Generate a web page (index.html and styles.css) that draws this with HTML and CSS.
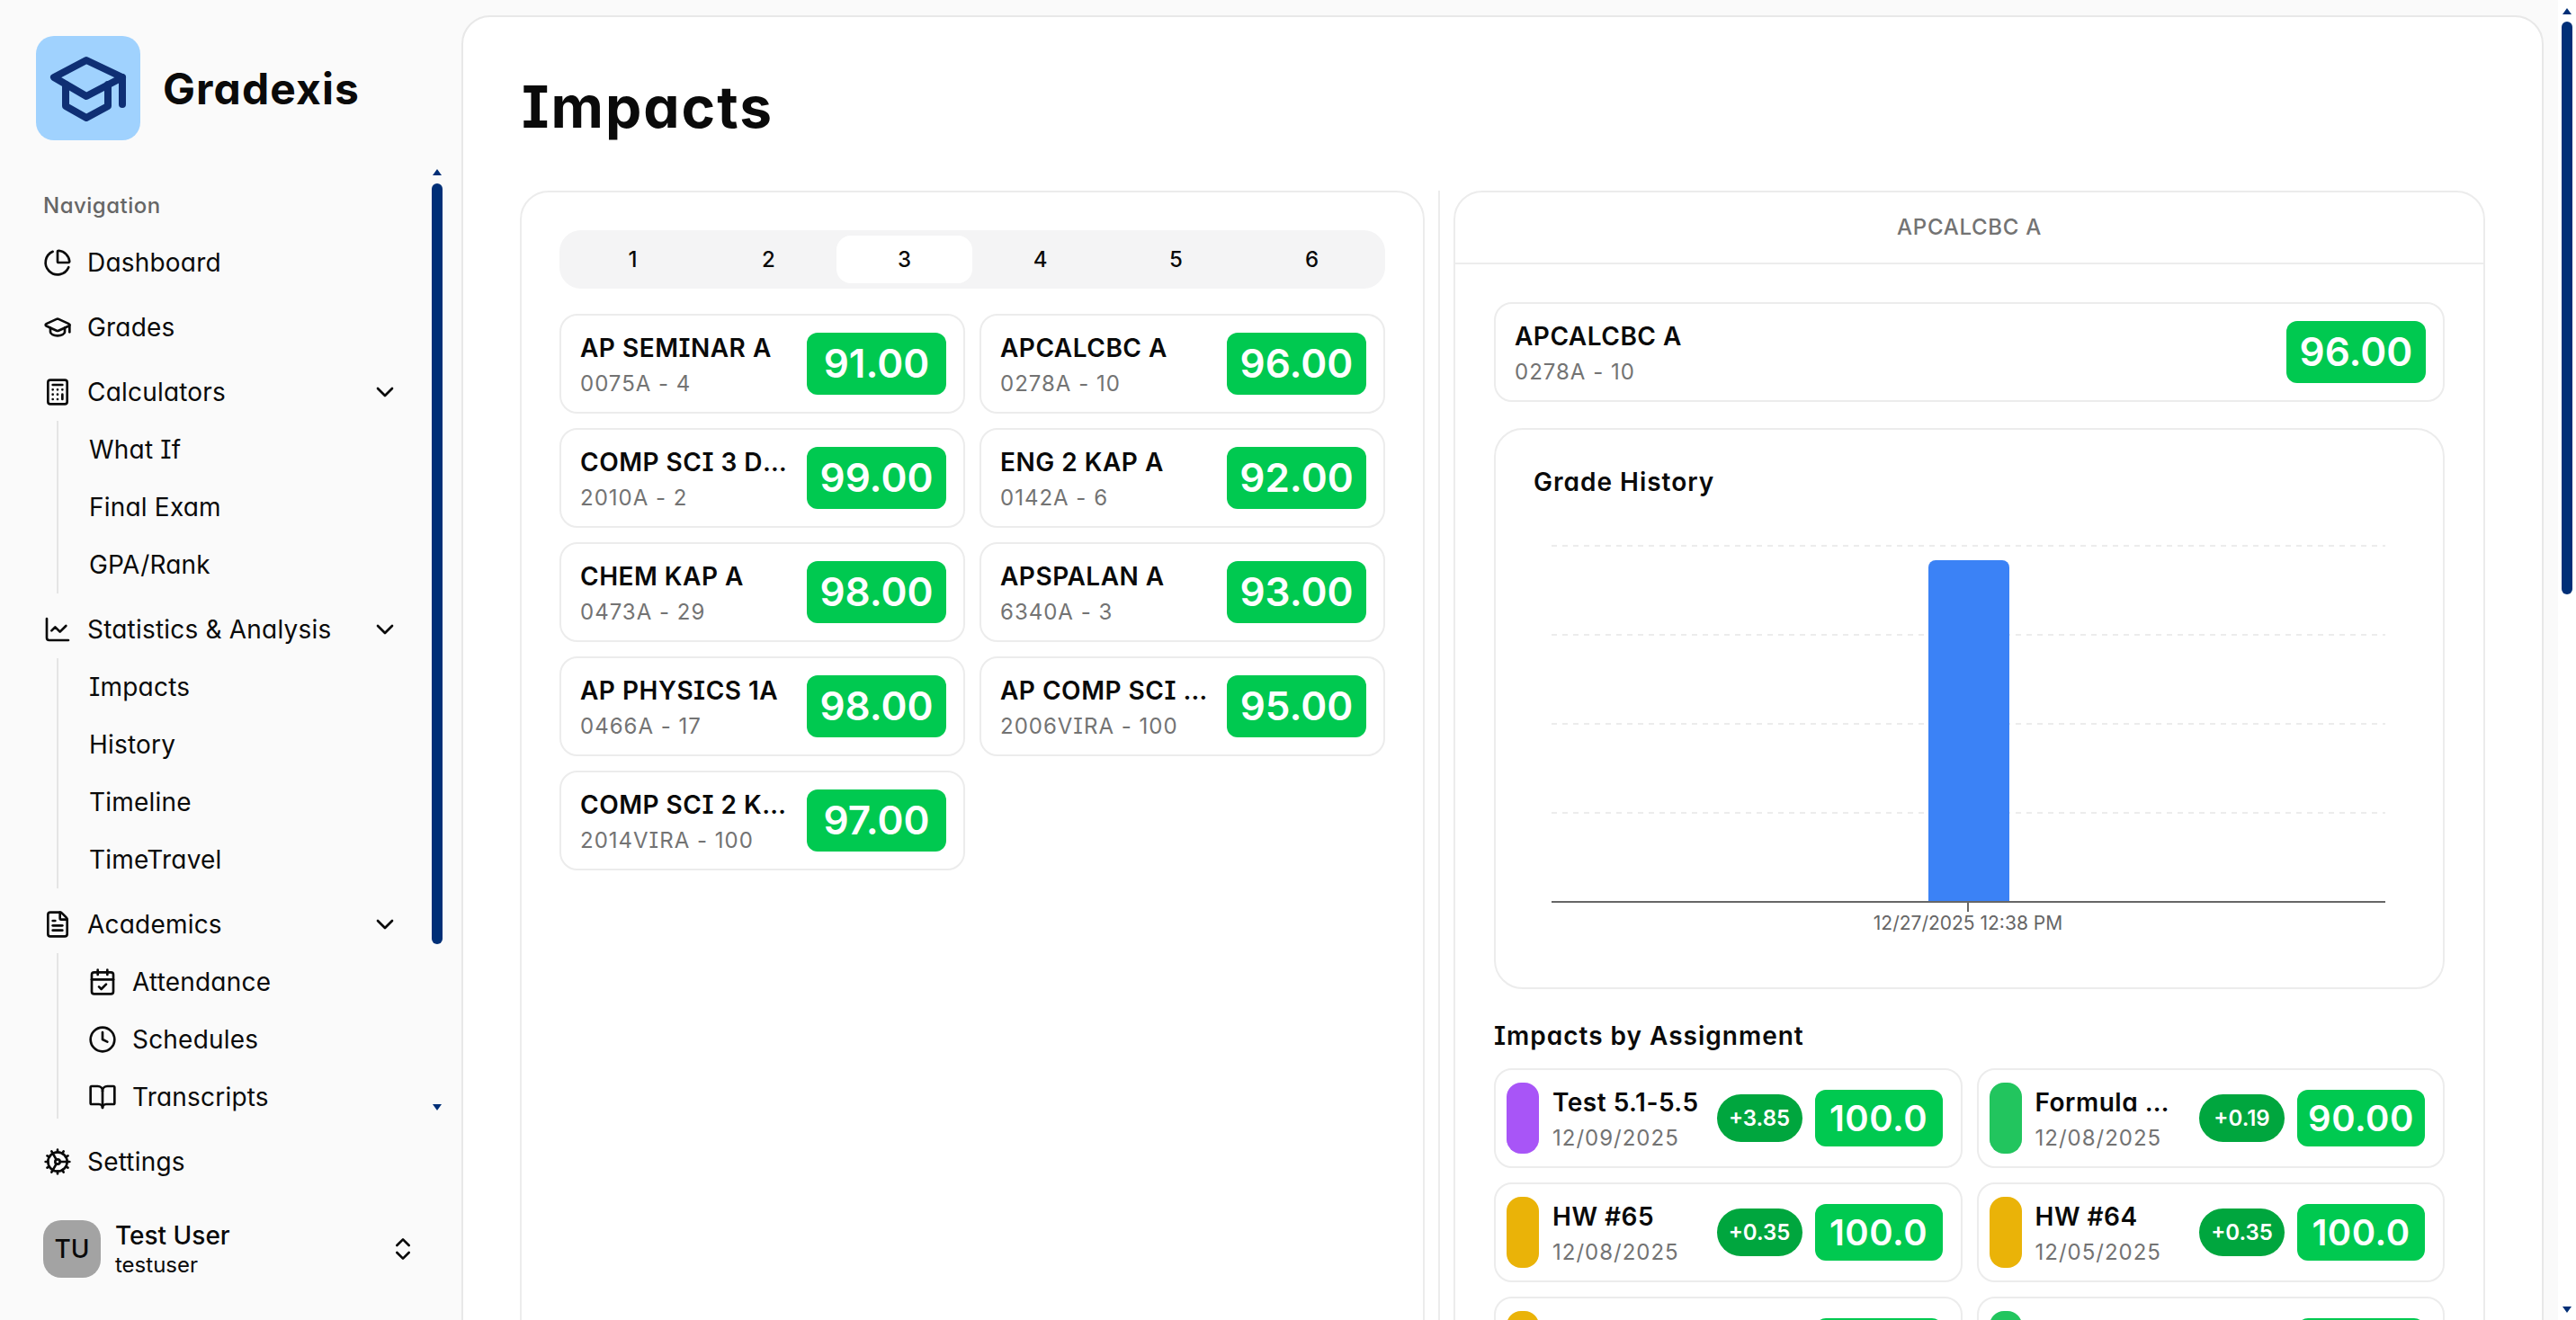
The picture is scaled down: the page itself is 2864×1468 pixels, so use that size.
FILE: index.html
```html
<!DOCTYPE html>
<html lang="en">
<head>
  <meta charset="UTF-8">
  <title>Impacts - Gradexis</title>
  <link rel="stylesheet" href="styles.css">
</head>
<body>
  <aside class="sidebar">
    <div class="brand">
      <div class="brand-logo">
        <svg viewBox="0 0 116 116" fill="none" stroke="currentColor" stroke-width="8" stroke-linecap="round" stroke-linejoin="round">
          <path d="M56 27 20 46l36 21 40-21z"/>
          <path d="M96 46v30"/>
          <path d="M33 54v24l23 13 24-13V54"/>
        </svg>
      </div>
      <span class="brand-name">Gradexis</span>
    </div>

    <div class="sidebar-body">
      <nav class="nav">
        <div class="nav-label">Navigation</div>
        <a class="nav-item">
          <svg class="icon" viewBox="0 0 24 24"><path d="M21 12c.552 0 1.005-.449.95-.998a10 10 0 0 0-8.953-8.951c-.55-.055-.998.398-.998.95v8a1 1 0 0 0 1 1z"/><path d="M21.21 15.89A10 10 0 1 1 8 2.83"/></svg>
          Dashboard
        </a>
        <a class="nav-item">
          <svg class="icon" viewBox="0 0 24 24"><path d="M21.42 10.922a1 1 0 0 0-.019-1.838L12.83 5.18a2 2 0 0 0-1.66 0L2.6 9.08a1 1 0 0 0 0 1.832l8.57 3.908a2 2 0 0 0 1.66 0z"/><path d="M22 10v6"/><path d="M6 12.5V16a6 3 0 0 0 12 0v-3.5"/></svg>
          Grades
        </a>
        <a class="nav-item">
          <svg class="icon" viewBox="0 0 24 24"><rect x="4" y="2" width="16" height="20" rx="2"/><path d="M8 6h8"/><path d="M16 14v4"/><path d="M16 10h.01M12 10h.01M8 10h.01M12 14h.01M8 14h.01M12 18h.01M8 18h.01"/></svg>
          Calculators
          <svg class="icon chevron" viewBox="0 0 24 24"><path d="m6 9 6 6 6-6"/></svg>
        </a>
        <div class="nav-sub">
          <a class="nav-subitem">What If</a>
          <a class="nav-subitem">Final Exam</a>
          <a class="nav-subitem">GPA/Rank</a>
        </div>
        <a class="nav-item">
          <svg class="icon" viewBox="0 0 24 24"><path d="M3 3v16a2 2 0 0 0 2 2h16"/><path d="m19 9-5 5-4-4-3 3"/></svg>
          Statistics &amp; Analysis
          <svg class="icon chevron" viewBox="0 0 24 24"><path d="m6 9 6 6 6-6"/></svg>
        </a>
        <div class="nav-sub">
          <a class="nav-subitem">Impacts</a>
          <a class="nav-subitem">History</a>
          <a class="nav-subitem">Timeline</a>
          <a class="nav-subitem">TimeTravel</a>
        </div>
        <a class="nav-item">
          <svg class="icon" viewBox="0 0 24 24"><path d="M6 22a2 2 0 0 1-2-2V4a2 2 0 0 1 2-2h8a2.4 2.4 0 0 1 1.704.706l3.588 3.588A2.4 2.4 0 0 1 20 8v12a2 2 0 0 1-2 2z"/><path d="M14 2v5a1 1 0 0 0 1 1h5"/><path d="M10 9H8"/><path d="M16 13H8"/><path d="M16 17H8"/></svg>
          Academics
          <svg class="icon chevron" viewBox="0 0 24 24"><path d="m6 9 6 6 6-6"/></svg>
        </a>
        <div class="nav-sub">
          <a class="nav-subitem">
            <svg class="icon" viewBox="0 0 24 24"><path d="M8 2v4"/><path d="M16 2v4"/><rect x="3" y="4" width="18" height="18" rx="2"/><path d="M3 10h18"/><path d="m9 16 2 2 4-4"/></svg>
            Attendance
          </a>
          <a class="nav-subitem">
            <svg class="icon" viewBox="0 0 24 24"><circle cx="12" cy="12" r="10"/><path d="M12 6v6l4 2"/></svg>
            Schedules
          </a>
          <a class="nav-subitem">
            <svg class="icon" viewBox="0 0 24 24"><path d="M12 7v14"/><path d="M3 18a1 1 0 0 1-1-1V4a1 1 0 0 1 1-1h5a4 4 0 0 1 4 4 4 4 0 0 1 4-4h5a1 1 0 0 1 1 1v13a1 1 0 0 1-1 1h-6a3 3 0 0 0-3 3 3 3 0 0 0-3-3z"/></svg>
            Transcripts
          </a>
        </div>
      </nav>
      <div class="sidebar-scroll">
        <span class="arrow-up"></span>
        <span class="sidebar-thumb"></span>
        <span class="arrow-down"></span>
      </div>
    </div>

    <a class="nav-item settings">
      <svg class="icon" viewBox="0 0 24 24"><path d="M12 20a8 8 0 1 0 0-16 8 8 0 0 0 0 16Z"/><path d="M12 14a2 2 0 1 0 0-4 2 2 0 0 0 0 4Z"/><path d="M12 2v2"/><path d="M12 22v-2"/><path d="m17 20.66-1-1.73"/><path d="M11 10.27 7 3.34"/><path d="m20.66 17-1.73-1"/><path d="m3.34 7 1.73 1"/><path d="M14 12h8"/><path d="M2 12h2"/><path d="m20.66 7-1.73 1"/><path d="m3.34 17 1.73-1"/><path d="m17 3.34-1 1.73"/><path d="m11 13.73-4 6.93"/></svg>
      Settings
    </a>

    <div class="profile">
      <div class="avatar">TU</div>
      <div class="profile-text">
        <div class="profile-name">Test User</div>
        <div class="profile-user">testuser</div>
      </div>
      <svg class="icon profile-toggle" viewBox="0 0 24 24"><path d="m7 15 5 5 5-5"/><path d="m7 9 5-5 5 5"/></svg>
    </div>
  </aside>

  <main class="main">
    <h1 class="page-title">Impacts</h1>
    <div class="panels">
      <section class="panel panel-left">
        <div class="tabs">
          <button class="tab">1</button>
          <button class="tab">2</button>
          <button class="tab active">3</button>
          <button class="tab">4</button>
          <button class="tab">5</button>
          <button class="tab">6</button>
        </div>
        <div class="course-grid">
          <div class="course-card">
            <div class="course-text"><div class="course-name">AP SEMINAR A</div><div class="course-sub">0075A - 4</div></div>
            <div class="score">91.00</div>
          </div>
          <div class="course-card">
            <div class="course-text"><div class="course-name">APCALCBC A</div><div class="course-sub">0278A - 10</div></div>
            <div class="score">96.00</div>
          </div>
          <div class="course-card">
            <div class="course-text"><div class="course-name">COMP SCI 3 DC A</div><div class="course-sub">2010A - 2</div></div>
            <div class="score">99.00</div>
          </div>
          <div class="course-card">
            <div class="course-text"><div class="course-name">ENG 2 KAP A</div><div class="course-sub">0142A - 6</div></div>
            <div class="score">92.00</div>
          </div>
          <div class="course-card">
            <div class="course-text"><div class="course-name">CHEM KAP A</div><div class="course-sub">0473A - 29</div></div>
            <div class="score">98.00</div>
          </div>
          <div class="course-card">
            <div class="course-text"><div class="course-name">APSPALAN A</div><div class="course-sub">6340A - 3</div></div>
            <div class="score">93.00</div>
          </div>
          <div class="course-card">
            <div class="course-text"><div class="course-name">AP PHYSICS 1A</div><div class="course-sub">0466A - 17</div></div>
            <div class="score">98.00</div>
          </div>
          <div class="course-card">
            <div class="course-text"><div class="course-name">AP COMP SCI PRIN A</div><div class="course-sub">2006VIRA - 100</div></div>
            <div class="score">95.00</div>
          </div>
          <div class="course-card">
            <div class="course-text"><div class="course-name">COMP SCI 2 KAP A</div><div class="course-sub">2014VIRA - 100</div></div>
            <div class="score">97.00</div>
          </div>
        </div>
      </section>

      <div class="divider"></div>

      <section class="panel panel-right">
        <header class="panel-header">APCALCBC A</header>
        <div class="panel-body">
          <div class="course-card">
            <div class="course-text"><div class="course-name">APCALCBC A</div><div class="course-sub">0278A - 10</div></div>
            <div class="score">96.00</div>
          </div>

          <div class="chart-card">
            <h3 class="chart-title">Grade History</h3>
            <svg class="chart" viewBox="0 0 971 468">
              <g class="chart-grid">
                <line x1="20" x2="947" y1="15" y2="15"/>
                <line x1="20" x2="947" y1="114" y2="114"/>
                <line x1="20" x2="947" y1="213" y2="213"/>
                <line x1="20" x2="947" y1="312" y2="312"/>
              </g>
              <path class="chart-bar" d="M439 411V39a8 8 0 0 1 8-8h74a8 8 0 0 1 8 8v372z"/>
              <line class="chart-axis" x1="20" x2="947" y1="411" y2="411"/>
              <line class="chart-tick" x1="483" x2="483" y1="411" y2="422"/>
              <text class="chart-label" x="483" y="442" text-anchor="middle">12/27/2025 12:38 PM</text>
            </svg>
          </div>

          <h3 class="section-title">Impacts by Assignment</h3>
          <div class="assignment-grid">
            <div class="assignment-card">
              <span class="tag tag-purple"></span>
              <div class="course-text"><div class="course-name">Test 5.1-5.5</div><div class="course-sub">12/09/2025</div></div>
              <div class="delta">+3.85</div>
              <div class="score score-small">100.0</div>
            </div>
            <div class="assignment-card">
              <span class="tag tag-green"></span>
              <div class="course-text"><div class="course-name">Formula Quiz</div><div class="course-sub">12/08/2025</div></div>
              <div class="delta">+0.19</div>
              <div class="score score-small">90.00</div>
            </div>
            <div class="assignment-card">
              <span class="tag tag-yellow"></span>
              <div class="course-text"><div class="course-name">HW #65</div><div class="course-sub">12/08/2025</div></div>
              <div class="delta">+0.35</div>
              <div class="score score-small">100.0</div>
            </div>
            <div class="assignment-card">
              <span class="tag tag-yellow"></span>
              <div class="course-text"><div class="course-name">HW #64</div><div class="course-sub">12/05/2025</div></div>
              <div class="delta">+0.35</div>
              <div class="score score-small">100.0</div>
            </div>
            <div class="assignment-card">
              <span class="tag tag-yellow"></span>
              <div class="course-text"><div class="course-name">HW #63</div><div class="course-sub">12/04/2025</div></div>
              <div class="delta">+0.35</div>
              <div class="score score-small">100.0</div>
            </div>
            <div class="assignment-card">
              <span class="tag tag-green"></span>
              <div class="course-text"><div class="course-name">Edit 55</div><div class="course-sub">12/03/2025</div></div>
              <div class="delta">+0.19</div>
              <div class="score score-small">100.0</div>
            </div>
          </div>
        </div>
      </section>
    </div>
  </main>

  <div class="page-scroll">
    <span class="arrow-up"></span>
    <span class="page-thumb"></span>
    <span class="arrow-down"></span>
  </div>
</body>
</html>
```

FILE: styles.css
```css
* {
  box-sizing: border-box;
}

html,
body {
  margin: 0;
  height: 100%;
  overflow: hidden;
}

body {
  display: flex;
  align-items: flex-start;
  height: 1468px;
  background: #fafafa;
  color: #0a0a0a;
  font-family: Inter, "Noto Sans", sans-serif;
  font-feature-settings: "cv11", "cv08";
}

/* sidebar */
.sidebar {
  width: 513px;
  flex: none;
  height: 100%;
  padding-top: 40px;
}

.brand {
  display: flex;
  align-items: center;
  gap: 25px;
  padding-left: 40px;
}

.brand-logo {
  width: 116px;
  height: 116px;
  border-radius: 20px;
  background: #a0d2fe;
  color: #0f2f74;
}

.brand-logo svg {
  display: block;
}

.brand-name {
  font-size: 48px;
  font-weight: 700;
  letter-spacing: 1.1px;
}

.sidebar-body {
  display: flex;
  height: 1060px;
  margin-top: 28px;
  padding-left: 48px;
  overflow: hidden;
}

.nav {
  width: 396px;
  padding-top: 25px;
}

.nav-label {
  height: 40px;
  line-height: 40px;
  margin-bottom: 11px;
  font-size: 24px;
  font-weight: 500;
  letter-spacing: 0.5px;
  color: #666;
}

.nav-item {
  display: flex;
  align-items: center;
  gap: 17px;
  height: 64px;
  margin-bottom: 8px;
  font-size: 28px;
  letter-spacing: 0.2px;
}

.nav-sub + .nav-item {
  margin-top: 8px;
}

.nav-item + .nav-sub {
  margin-top: -8px;
}

.nav-sub {
  margin-left: 15px;
  padding-left: 34px;
  border-left: 2px solid #e5e5e5;
}

.nav-subitem {
  display: flex;
  align-items: center;
  gap: 17px;
  height: 64px;
  font-size: 28px;
  letter-spacing: 0.2px;
}

.nav-subitem .icon {
  margin-left: -1px;
}

.icon {
  width: 32px;
  height: 32px;
  flex: none;
  fill: none;
  stroke: currentColor;
  stroke-width: 2;
  stroke-linecap: round;
  stroke-linejoin: round;
}

.chevron {
  margin-left: auto;
}

.settings {
  width: 444px;
  margin: 16px 0 0;
  padding-left: 48px;
}

.profile {
  display: flex;
  align-items: center;
  width: 464px;
  margin-top: 32px;
  padding-left: 48px;
}

.avatar {
  width: 64px;
  height: 64px;
  border-radius: 20px;
  background: #a3a3a3;
  font-size: 28px;
  font-weight: 500;
  line-height: 64px;
  text-align: center;
}

.profile-text {
  margin-left: 16px;
}

.profile-name {
  font-size: 28px;
  font-weight: 500;
  line-height: 36px;
}

.profile-user {
  font-size: 24px;
  line-height: 30px;
}

.profile-toggle {
  margin-left: auto;
}

/* scrollbars */
.sidebar-scroll,
.page-scroll {
  display: flex;
  flex-direction: column;
  align-items: center;
  flex: none;
}

.sidebar-scroll {
  width: 12px;
  margin-left: 36px;
  padding-top: 4px;
}

.page-scroll {
  width: 20px;
  height: 100%;
  margin-left: 16px;
  padding-top: 9px;
  background: #fff;
}

.arrow-up,
.arrow-down {
  flex: none;
  width: 0;
  height: 0;
  border-left: 5px solid transparent;
  border-right: 5px solid transparent;
}

.arrow-up {
  border-bottom: 7px solid #002f77;
}

.arrow-down {
  margin-top: auto;
  border-top: 7px solid #002f77;
}

.sidebar-scroll .arrow-down {
  margin-bottom: 9px;
}

.page-scroll .arrow-down {
  margin-bottom: 8px;
}

.sidebar-thumb,
.page-thumb {
  flex: none;
  width: 12px;
  border-radius: 6px;
  background: #002f77;
}

.sidebar-thumb {
  height: 846px;
  margin-top: 9px;
}

.page-thumb {
  height: 637px;
  margin-top: 8px;
}

/* main panel */
.main {
  width: 2315px;
  flex: none;
  margin-top: 17px;
  padding: 60px 63px 44px;
  border: 2px solid #e8e8e8;
  border-radius: 32px;
  background: #fff;
}

.page-title {
  margin: 0 0 53px;
  padding-left: 2px;
  font-size: 64px;
  font-weight: 700;
  line-height: 80px;
  letter-spacing: 2px;
}

.panels {
  display: flex;
}

.panel {
  border: 2px solid #ececec;
  border-radius: 32px;
}

.panel-left {
  width: 1006px;
  flex: none;
  padding: 42px;
}

.divider {
  flex: none;
  width: 32px;
  display: flex;
  justify-content: center;
}

.divider::before {
  content: "";
  width: 2px;
  background: #ececec;
}

.panel-right {
  flex: 1;
  min-width: 0;
}

.panel-header {
  height: 80px;
  line-height: 78px;
  border-bottom: 2px solid #ececec;
  text-align: center;
  font-size: 24px;
  font-weight: 500;
  letter-spacing: 0.7px;
  color: #737373;
}

.panel-body {
  padding: 42px 43px;
}

.tabs {
  display: grid;
  grid-template-columns: repeat(6, minmax(0, 1fr));
  height: 65px;
  padding: 6px;
  border-radius: 24px;
  background: #f4f4f5;
}

.tab {
  border: none;
  border-radius: 16px;
  background: none;
  color: #0a0a0a;
  font: 500 24px Inter, "Noto Sans", sans-serif;
  font-feature-settings: "cv11", "cv08";
}

.tab.active {
  background: #fff;
}

.course-grid {
  display: grid;
  grid-template-columns: repeat(2, minmax(0, 1fr));
  gap: 16px;
  margin-top: 28px;
}

.course-card,
.assignment-card {
  display: flex;
  align-items: center;
  height: 111px;
  border: 2px solid #ececec;
  border-radius: 20px;
  background: #fff;
}

.course-card {
  gap: 16px;
  padding: 0 19px 0 21px;
}

.course-text {
  flex: 1;
  min-width: 0;
}

.course-name {
  font-size: 28px;
  font-weight: 600;
  line-height: 40px;
  letter-spacing: 0.5px;
  white-space: nowrap;
  overflow: hidden;
  text-overflow: ellipsis;
}

.course-sub {
  margin-top: 4px;
  font-size: 24px;
  line-height: 32px;
  letter-spacing: 1px;
  color: #737373;
  white-space: nowrap;
}

.score {
  flex: none;
  width: 155px;
  height: 69px;
  border-radius: 12px;
  background: #00c950;
  color: #fff;
  font-size: 44px;
  font-weight: 600;
  line-height: 69px;
  text-align: center;
}

.score-small {
  width: 142px;
  height: 63px;
  font-size: 40px;
  line-height: 63px;
  letter-spacing: 0.5px;
}

.chart-card {
  height: 624px;
  margin-top: 29px;
  padding: 38px 42px;
  border: 2px solid #ececec;
  border-radius: 32px;
}

.chart-title,
.section-title {
  margin: 0;
  font-size: 28px;
  font-weight: 600;
  line-height: 40px;
  letter-spacing: 1px;
}

.chart {
  display: block;
  width: 971px;
  height: 468px;
  margin-top: 36px;
}

.chart-grid line {
  stroke: #ececec;
  stroke-width: 2;
  stroke-dasharray: 6 6;
}

.chart-bar {
  fill: #3b82f6;
}

.chart-axis {
  stroke: #666;
  stroke-width: 2;
}

.chart-tick {
  stroke: #666;
  stroke-width: 2;
}

.chart-label {
  fill: #666;
  font-size: 21px;
}

.section-title {
  margin-top: 32px;
}

.assignment-grid {
  display: grid;
  grid-template-columns: repeat(2, minmax(0, 1fr));
  gap: 16px;
  margin-top: 16px;
}

.assignment-card {
  padding: 0 20px 0 12px;
}

.tag {
  flex: none;
  width: 36px;
  height: 79px;
  margin-right: 15px;
  border-radius: 16px;
}

.tag-purple {
  background: #a855f7;
}

.tag-green {
  background: #22c55e;
}

.tag-yellow {
  background: #eab308;
}

.delta {
  flex: none;
  width: 95px;
  height: 53px;
  margin: 0 14px;
  border-radius: 27px;
  background: #00a63e;
  color: #fff;
  font-size: 24px;
  font-weight: 600;
  line-height: 53px;
  text-align: center;
}
```
